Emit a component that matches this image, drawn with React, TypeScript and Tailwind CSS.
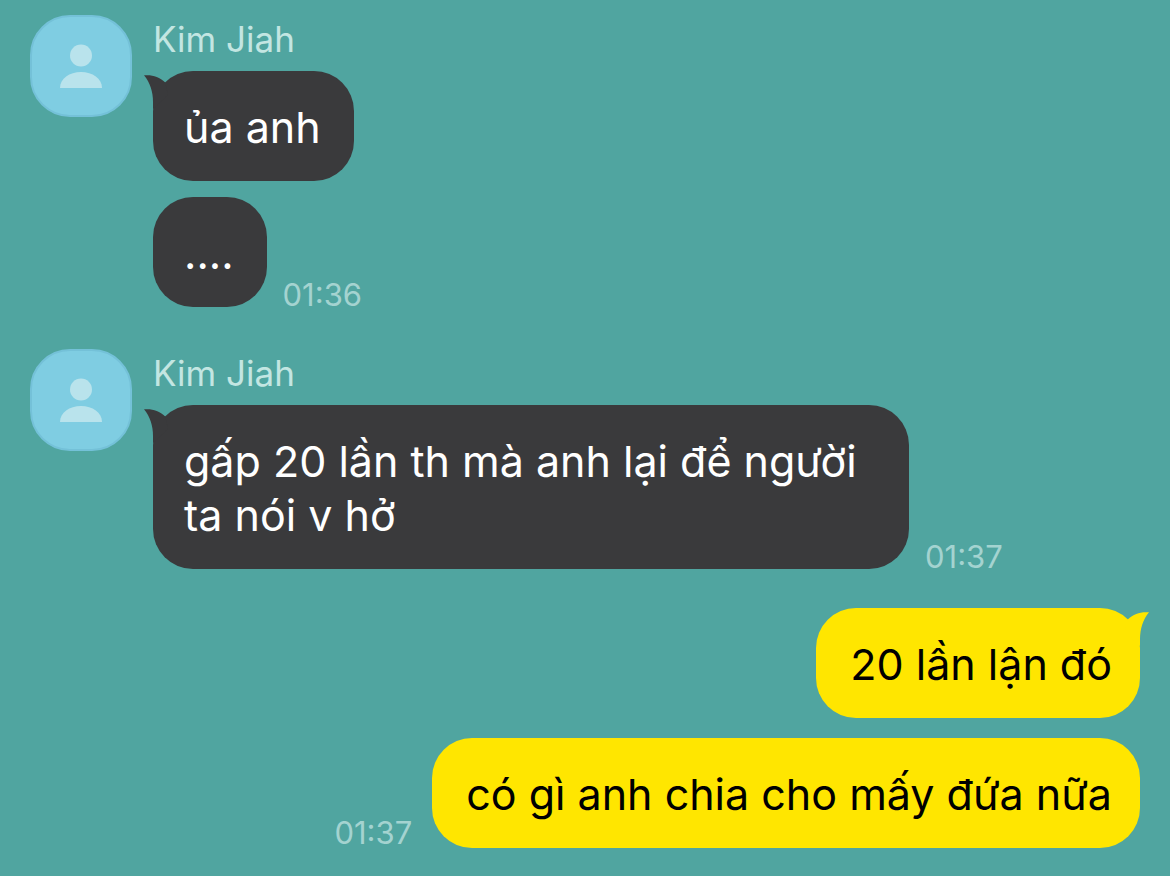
import React from "react";

type Message = {
  text: string;
  time?: string;
};

const Avatar = () => (
  <div className="flex h-[102px] w-[102px] shrink-0 items-center justify-center rounded-[40px] border-2 border-[#74c1d8] bg-[#7fcde2]">
    <svg viewBox="0 0 42 44" className="h-11 w-[42px] fill-[#b9e3ec]" aria-hidden="true">
      <circle cx="21" cy="11.500" r="11" />
      <path d="M0 44C0 34.500 9.500 28 21 28S42 34.500 42 44Z" />
    </svg>
  </div>
);

const Time = ({ value }: { value: string }) => (
  <time className="text-[31px] leading-6 text-[#a4d3d0]">{value}</time>
);

const LeftTail = () => (
  <svg
    viewBox="0 0 24 34"
    className="absolute -left-[9px] top-1 h-[34px] w-6 fill-[#3a3a3c]"
    aria-hidden="true"
  >
    <path d="M0 0.300C8-0.500 15 1.500 21.300 7.500L24 20L9 34V27C9 17 6 7.500 0 0.300Z" />
  </svg>
);

const RightTail = () => (
  <svg
    viewBox="0 0 24 34"
    className="absolute -right-[9px] top-1 h-[34px] w-6 fill-[#ffe600]"
    aria-hidden="true"
  >
    <path d="M24 0.300C16-0.500 9 1.500 2.700 7.500L0 20L15 34V27C15 17 18 7.500 24 0.300Z" />
  </svg>
);

const Received = ({ name, messages }: { name: string; messages: Message[] }) => (
  <section className="flex items-start gap-[21px]">
    <Avatar />
    <div className="min-w-0 flex-1">
      <h2 className="text-[35px] leading-12 text-[#c3e6e2]">{name}</h2>
      <div className="mt-2 space-y-4">
        {messages.map((message, i) => (
          <div key={i} className="flex items-end gap-4">
            <div className="relative max-w-[756px] rounded-[40px] bg-[#3a3a3c] pt-[29px] pr-[33px] pb-[27px] pl-[31px] text-white">
              {i === 0 && <LeftTail />}
              <p className="text-[43px] leading-[54px]">{message.text}</p>
            </div>
            {message.time && <Time value={message.time} />}
          </div>
        ))}
      </div>
    </div>
  </section>
);

const Sent = ({ messages }: { messages: Message[] }) => (
  <section className="space-y-5">
    {messages.map((message, i) => (
      <div key={i} className="flex items-end justify-end gap-5">
        {message.time && (
          <div className="flex pb-[3px]">
            <Time value={message.time} />
          </div>
        )}
        <div className="relative max-w-[756px] rounded-[40px] bg-[#ffe600] pt-[29px] pr-7 pb-[27px] pl-[34px] text-black">
          {i === 0 && <RightTail />}
          <p className="text-[43px] leading-[54px]">{message.text}</p>
        </div>
      </div>
    ))}
  </section>
);

const App = () => {
  return (
    <main className="min-h-screen bg-[#50a5a0] px-[30px] pt-[15px] pb-7 font-['Inter','Noto_Sans',sans-serif]">
      <Received
        name="Kim Jiah"
        messages={[{ text: "ủa anh" }, { text: "....", time: "01:36" }]}
      />

      <div className="mt-[42px]">
        <Received
          name="Kim Jiah"
          messages={[
            { text: "gấp 20 lần th mà anh lại để người ta nói v hở", time: "01:37" },
          ]}
        />
      </div>

      <div className="mt-[39px]">
        <Sent
          messages={[
            { text: "20 lần lận đó" },
            { text: "có gì anh chia cho mấy đứa nữa", time: "01:37" },
          ]}
        />
      </div>
    </main>
  );
};

export default App;
